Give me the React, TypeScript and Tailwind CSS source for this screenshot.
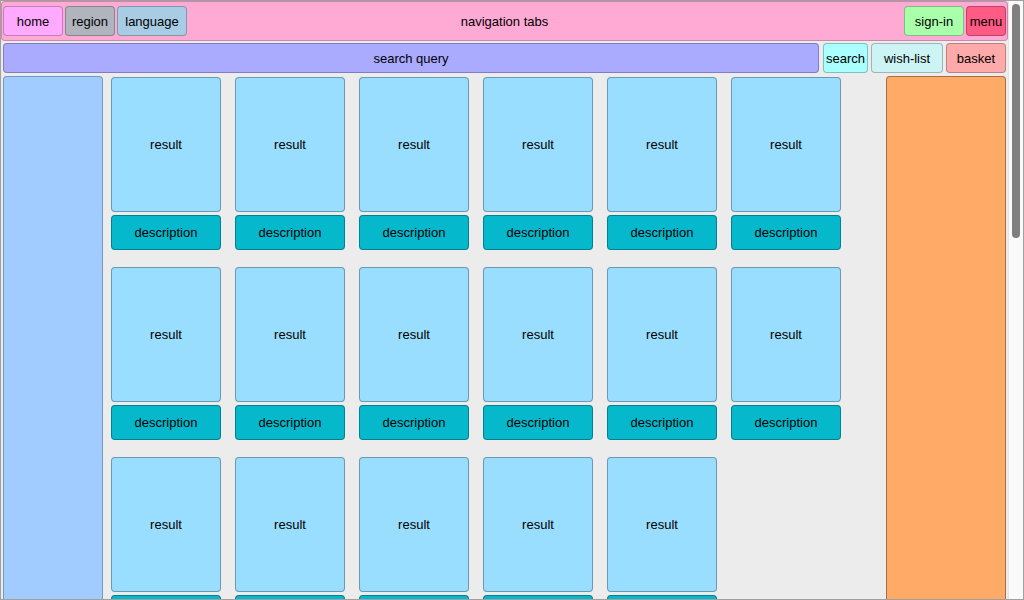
import React from "react";

const font = { fontFamily: '"Liberation Sans", Arial, Helvetica, sans-serif' };

function Btn({ label, cls }: { label: string; cls: string }) {
  return (
    <div
      className={`h-[30px] flex items-center justify-center pt-[2px] rounded-[4px] border border-black/25 text-[13px] text-black ${cls}`}
    >
      {label}
    </div>
  );
}

function Card({ desc = true }: { desc?: boolean }) {
  return (
    <div className="flex flex-col gap-[3px] w-[110px]">
      <div className="h-[135px] flex items-center justify-center rounded-[4px] border border-black/30 bg-[#99ddff] text-[13px] text-black">
        result
      </div>
      {desc && (
        <div className="h-[35px] flex items-center justify-center rounded-[4px] border border-black/30 bg-[#05b8cc] text-[13px] text-black">
          description
        </div>
      )}
    </div>
  );
}

export default function App() {
  const rows = [6, 6, 5];
  return (
    <div
      className="w-[1024px] h-[600px] overflow-hidden border border-[#a0a0a0] flex bg-[#ececec]"
      style={font}
    >
      <div className="w-[1007px] shrink-0 flex flex-col">
        {/* header */}
        <div className="h-[40px] shrink-0 grid grid-cols-[1fr_auto_1fr] items-center px-px rounded-[4px] border border-black/20 bg-[#ffaad4]">
          <div className="flex gap-[2px]">
            <Btn label="home" cls="w-[60px] bg-[#ffaaff]" />
            <Btn label="region" cls="w-[50px] bg-[#b0b4bc]" />
            <Btn label="language" cls="w-[70px] bg-[#a8cce4]" />
          </div>
          <div className="text-center text-[13px] text-black pt-[2px]">navigation tabs</div>
          <div className="flex gap-[2px] justify-end">
            <Btn label="sign-in" cls="w-[60px] bg-[#aaffaa]" />
            <Btn label="menu" cls="w-[40px] bg-[#ff5b85]" />
          </div>
        </div>
        {/* search row */}
        <div className="mt-[2px] flex px-[2px] gap-[3px]">
          <Btn label="search query" cls="flex-1 mr-px bg-[#aaaaff]" />
          <Btn label="search" cls="w-[45px] bg-[#aaffff]" />
          <Btn label="wish-list" cls="w-[72px] bg-[#ccf4f4]" />
          <Btn label="basket" cls="w-[60px] bg-[#ffaaaa]" />
        </div>
        {/* main */}
        <div className="mt-[3px] flex px-[2px] flex-1 min-h-0">
          <div className="w-[100px] shrink-0 h-[560px] rounded-[4px] border border-black/25 bg-[#a0ccff]" />
          <div className="flex-1 pl-[8px] pt-px flex flex-col gap-[17px]">
            {rows.map((n, r) => (
              <div key={r} className="flex gap-[14px]">
                {Array.from({ length: n }).map((_, i) => (
                  <Card key={i} desc={r < 2} />
                ))}
              </div>
            ))}
            <div className="-mt-[14px] flex gap-[14px]">
              {Array.from({ length: 5 }).map((_, i) => (
                <div
                  key={i}
                  className="w-[110px] h-[35px] rounded-[4px] border border-black/30 bg-[#05b8cc]"
                />
              ))}
            </div>
          </div>
          <div className="w-[120px] shrink-0 h-[560px] rounded-[4px] border border-black/35 bg-[#ffaa66]" />
        </div>
      </div>
      {/* scrollbar */}
      <div className="w-[15px] shrink-0 border-l border-[#e6e6e6] bg-[#fafafa] pt-[3px] pl-[3px]">
        <div className="w-[8px] h-[234px] rounded-full bg-[#7f7f7f]" />
      </div>
    </div>
  );
}
